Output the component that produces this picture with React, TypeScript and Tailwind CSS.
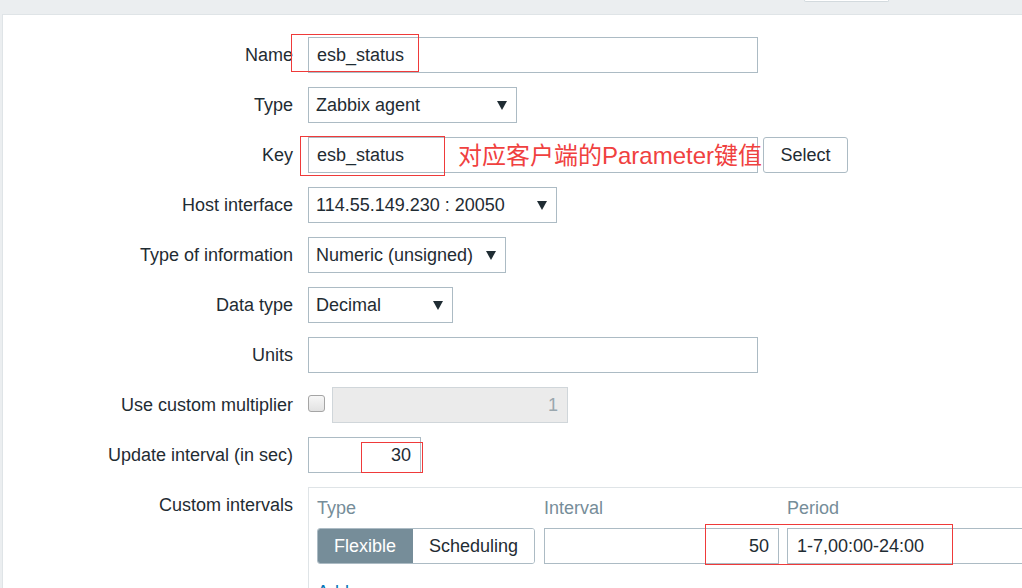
import React from "react";

const label = "text-[18px] text-[#1f2c33]";
const field = "h-9 shrink-0 border border-[#acbbc4] bg-white flex items-center text-[18px] text-[#1f2c33]";

function Arrow() {
  return (
    <svg width="10" height="9" viewBox="0 0 10 9" className="shrink-0">
      <polygon points="0,0 10,0 5,9" fill="#1f2c33" />
    </svg>
  );
}

function Row({ name, children, top = false }: { name: string; children: React.ReactNode; top?: boolean }) {
  return (
    <div className={top ? "flex items-start" : "flex items-center h-9"}>
      <div className={`w-[290px] shrink-0 text-right ${label} ${top ? "h-9 flex items-center justify-end" : ""}`}>{name}</div>
      <div className="ml-[15px] flex items-center flex-1">{children}</div>
    </div>
  );
}

function Select({ value, width }: { value: string; width: string }) {
  return (
    <div className={`${field} ${width} pl-[7px] pr-[9px] justify-between`}>
      <span>{value}</span>
      <Arrow />
    </div>
  );
}

function RedBox({ className }: { className: string }) {
  return <div className={`absolute border border-[#ef3a3a] pointer-events-none ${className}`} />;
}

export default function App() {
  return (
    <div className="w-[1022px] h-[588px] overflow-hidden bg-[#ebeef0] font-['Liberation_Sans','Noto_Sans_CJK_SC',sans-serif]">
      <div className="h-[14px] flex">
        <div className="ml-[804px] w-[85px] h-[2px] bg-white border border-t-0 border-[#d3dade] rounded-b-[2px]" />
      </div>
      <div className="ml-[2px] h-[574px] bg-white border-l border-t border-[#dfe4e7] pt-[22px] flex flex-col gap-[14px]">
        <Row name="Name">
          <div className="relative">
            <div className={`${field} w-[450px] pl-[8px]`}>esb_status</div>
            <RedBox className="-left-[17px] -top-[3px] w-[128px] h-[38px]" />
          </div>
        </Row>
        <Row name="Type">
          <Select value="Zabbix agent" width="w-[209px]" />
        </Row>
        <Row name="Key">
          <div className="relative">
            <div className={`${field} w-[450px] pl-[8px]`}>esb_status</div>
            <RedBox className="-left-[8px] -top-[1px] w-[145px] h-[40px]" />
            <div className="absolute left-[150px] top-[7px] whitespace-nowrap text-[24px] leading-none text-[#f0413f]">
              对应客户端的Parameter键值
            </div>
          </div>
          <div className="ml-[5px] h-9 w-[85px] shrink-0 border border-[#acbbc4] rounded-[3px] bg-white flex items-center justify-center text-[18px] text-[#1f2c33]">
            Select
          </div>
        </Row>
        <Row name="Host interface">
          <Select value="114.55.149.230 : 20050" width="w-[249px]" />
        </Row>
        <Row name="Type of information">
          <Select value="Numeric (unsigned)" width="w-[198px]" />
        </Row>
        <Row name="Data type">
          <Select value="Decimal" width="w-[145px]" />
        </Row>
        <Row name="Units">
          <div className={`${field} w-[450px]`} />
        </Row>
        <Row name="Use custom multiplier">
          <div className="w-[17px] h-[17px] shrink-0 rounded-[3px] border border-[#a5a5a5] bg-gradient-to-b from-[#f7f7f7] to-[#e2e2e2] -mt-[3px]" />
          <div className="ml-[7px] h-9 w-[236px] shrink-0 border border-[#d0d6da] bg-[#ebebeb] flex items-center justify-end pr-[9px] text-[18px] text-[#9aa7ae]">
            1
          </div>
        </Row>
        <Row name="Update interval (in sec)">
          <div className="relative">
            <div className={`${field} w-[113px] justify-end pr-[9px]`}>30</div>
            <RedBox className="left-[53px] top-[5px] w-[62px] h-[31px]" />
          </div>
        </Row>
        <Row name="Custom intervals" top>
          <div className="w-[900px] shrink-0 border-l border-t border-[#dfe4e7] pl-[8px] pt-[10px]">
            <div className="flex h-5 items-center text-[18px] text-[#768d99]">
              <div className="w-[227px] shrink-0">Type</div>
              <div className="w-[243px] shrink-0">Interval</div>
              <div>Period</div>
            </div>
            <div className="relative mt-[10px] flex items-center h-9">
              <div className="flex h-9 shrink-0 rounded-[3px] overflow-hidden border border-[#acbbc4] text-[18px]">
                <div className="w-[96px] shrink-0 bg-[#768d99] text-white flex items-center justify-center -my-px -ml-px">Flexible</div>
                <div className="w-[121px] shrink-0 bg-white text-[#1f2c33] flex items-center justify-center">Scheduling</div>
              </div>
              <div className={`${field} ml-[9px] w-[235px] justify-end pr-[9px]`}>50</div>
              <div className={`${field} ml-[8px] w-[300px] pl-[9px]`}>1-7,00:00-24:00</div>
              <RedBox className="left-[388px] -top-[4px] w-[248px] h-[41px]" />
            </div>
            <div className="mt-[15px] text-[18px] text-[#0275b8]">Add</div>
          </div>
        </Row>
      </div>
    </div>
  );
}
